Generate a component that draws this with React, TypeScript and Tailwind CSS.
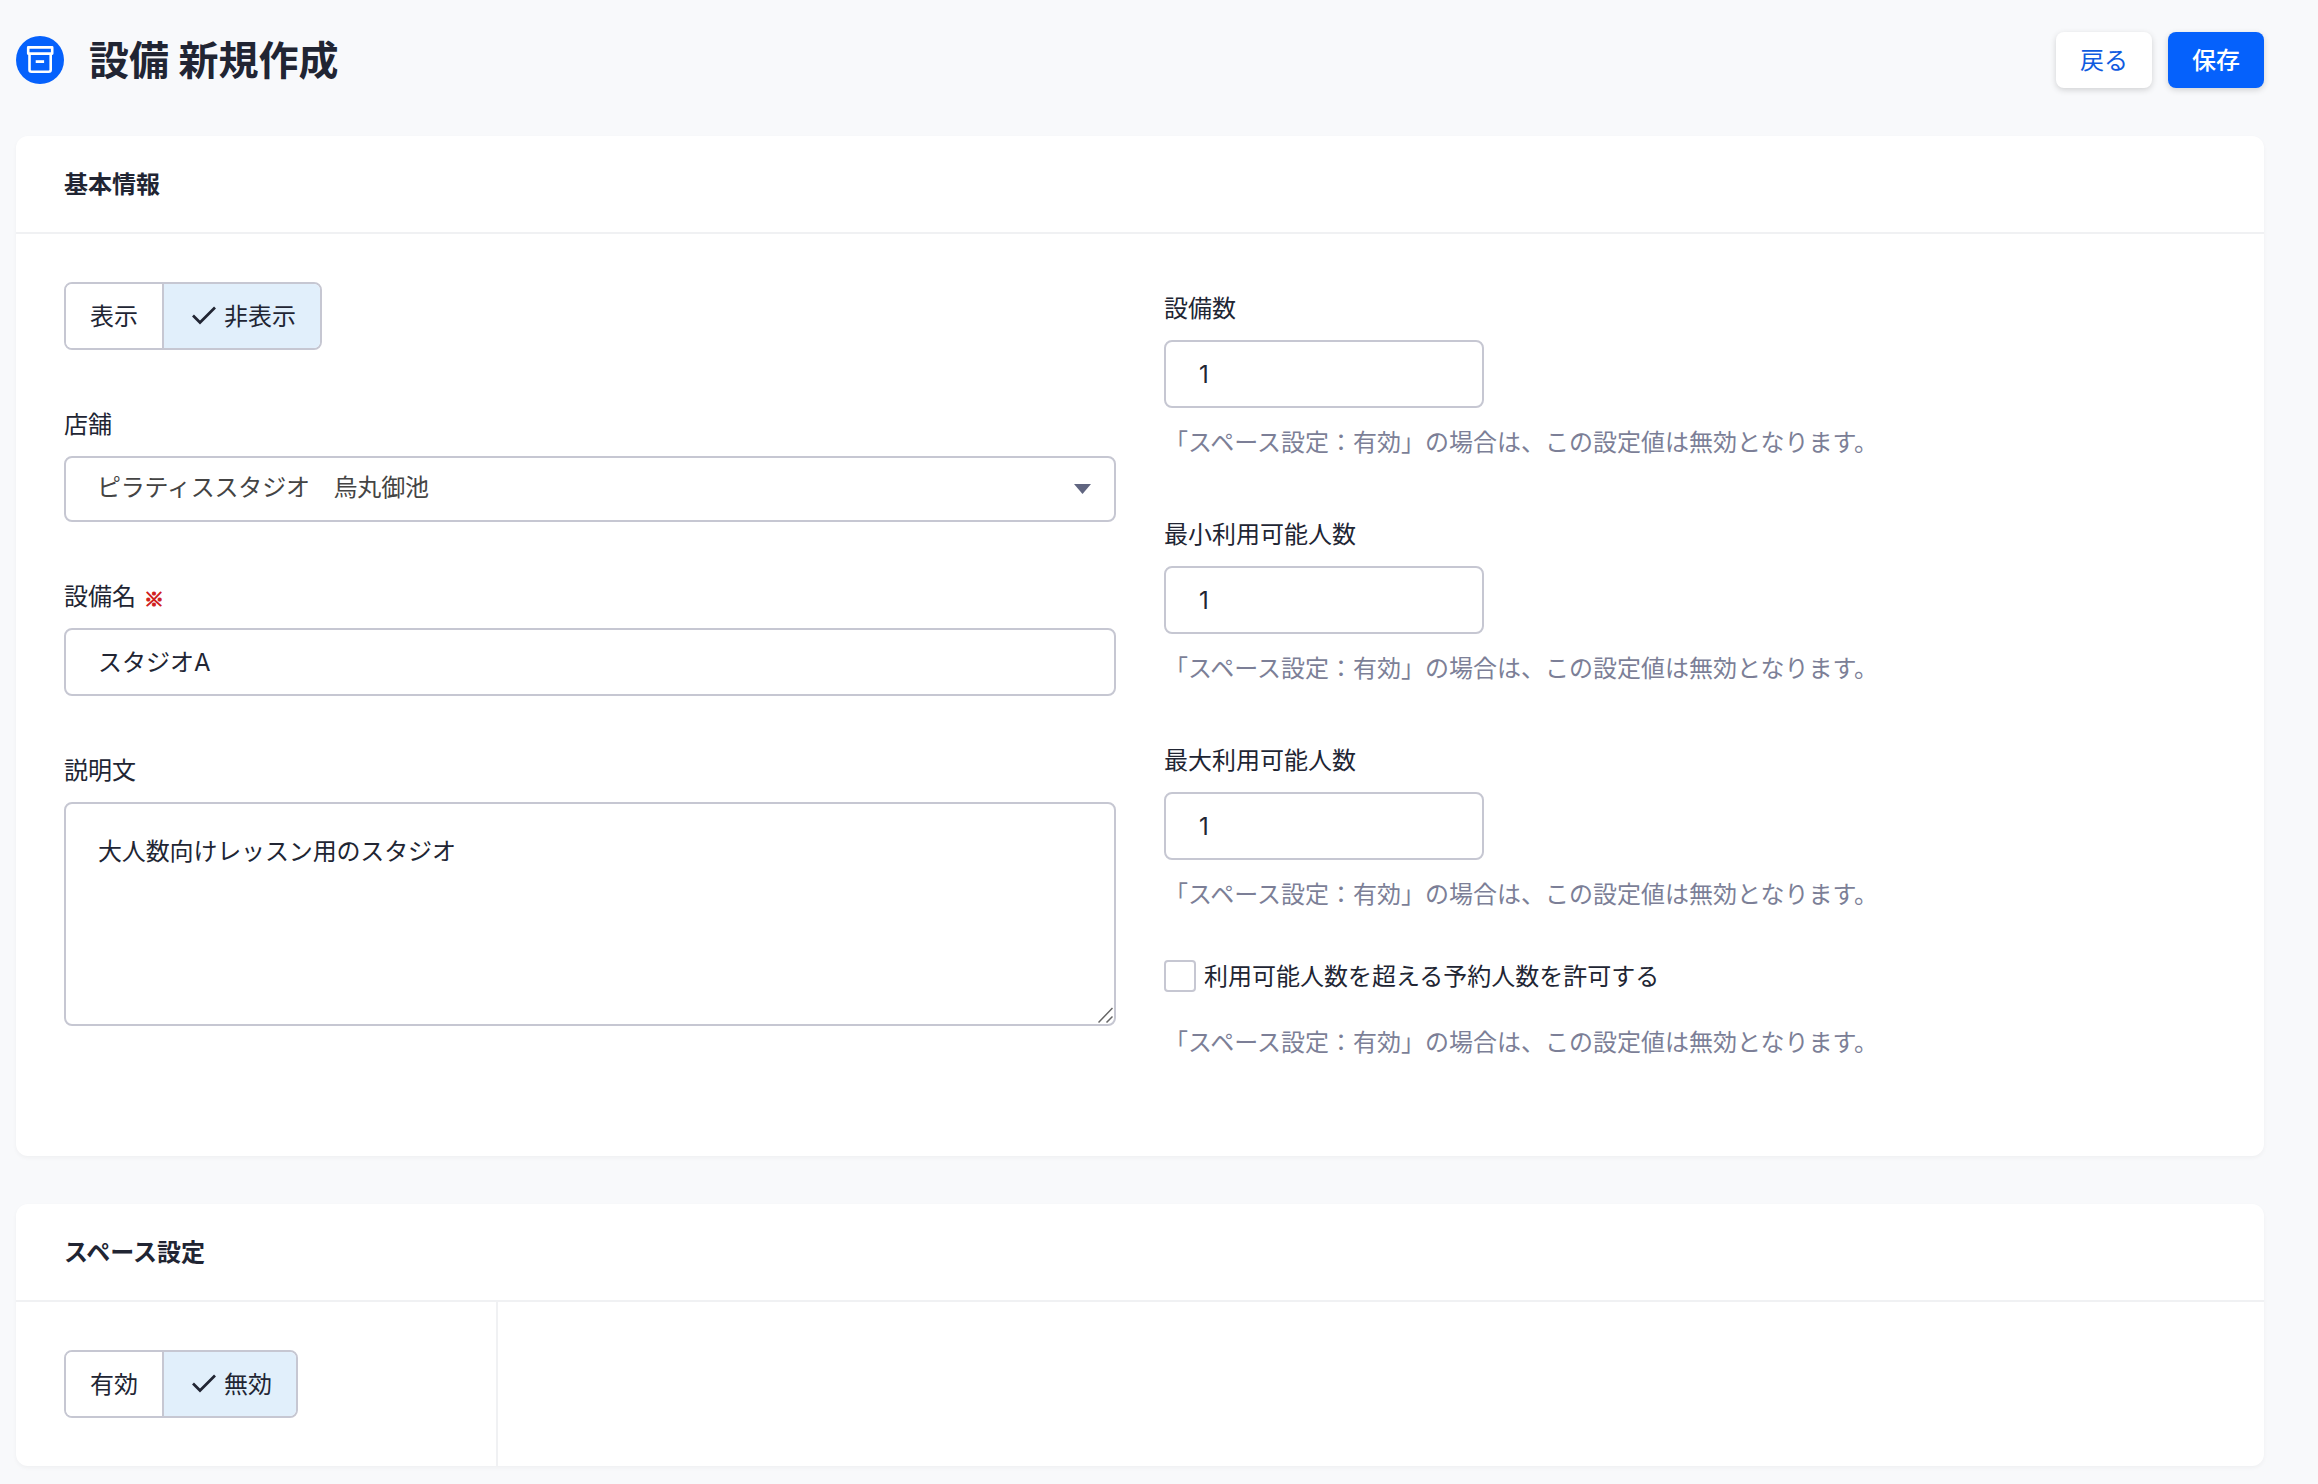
import { useState } from 'react';

function ArchiveIcon() {
  return (
    <div className="w-12 h-12 rounded-full bg-[#0561fc] flex items-center justify-center">
      <svg width="28" height="28" viewBox="0 0 28 28" fill="none" stroke="#fff" strokeWidth="2.600">
        <path d="M2.200 1.400h24v6.200h-24z" strokeLinejoin="round" />
        <path d="M3.500 7.500v16.200a2 2 0 0 0 2 2h17.200a2 2 0 0 0 2-2V7.500" />
        <path d="M9.700 15.600h8.400" strokeWidth="2.800" />
      </svg>
    </div>
  );
}

function CheckIcon() {
  return (
    <svg className="w-9 h-8" viewBox="0 0 36 32" fill="none" stroke="#212533" strokeWidth="2.700">
      <path d="M5 15.500l7 7L27 7.500" />
    </svg>
  );
}

function Toggle({ options, initial }: { options: string[]; initial: string }) {
  const [selected, setSelected] = useState(initial);

  return (
    <div className="inline-flex h-[68px] border-2 border-[#c6c7d2] rounded-lg overflow-hidden">
      {options.map((option, i) => (
        <button
          key={option}
          onClick={() => setSelected(option)}
          className={`flex items-center px-6 ${i > 0 ? 'border-l-2 border-[#c6c7d2]' : ''} ${
            selected === option ? 'bg-[#e1effb]' : 'bg-white'
          }`}
        >
          {selected === option && <CheckIcon />}
          <span className="pt-0.5">{option}</span>
        </button>
      ))}
    </div>
  );
}

function Label({ text, required }: { text: string; required?: boolean }) {
  return (
    <div className="h-9 mb-[14px] pt-0.5 flex items-center">
      <span>{text}</span>
      {required && (
        <span className="ml-2 mt-[3px] text-[20px] leading-8 font-bold text-[#d0211c] font-['Noto_Sans_CJK_JP',sans-serif] [-webkit-text-stroke:1px_#d0211c]">
          ※
        </span>
      )}
    </div>
  );
}

function HelpText() {
  return (
    <p className="h-9 leading-[38px] text-[#7c7f97] whitespace-nowrap">
      「スペース設定：有効」の場合は、この設定値は無効となります。
    </p>
  );
}

function NumberField({ label }: { label: string }) {
  const [value, setValue] = useState('1');

  return (
    <div className="mb-14">
      <Label text={label} />
      <input
        value={value}
        onChange={(e) => setValue(e.target.value)}
        className="block w-80 h-[68px] mb-4 pl-[33px] pr-8 border-2 border-[#c6c7d2] rounded-lg outline-none"
      />
      <HelpText />
    </div>
  );
}

function CardHeader({ title }: { title: string }) {
  return (
    <div className="h-[98px] pl-12 pt-0.5 flex items-center border-b-2 border-[#f0f1f3]">
      <h2 className="font-bold">{title}</h2>
    </div>
  );
}

export default function App() {
  const [name, setName] = useState('スタジオA');
  const [description, setDescription] = useState('大人数向けレッスン用のスタジオ');

  return (
    <div className="h-[1484px] overflow-hidden bg-[#f8f9fb] pl-4 pr-[54px] pt-8 text-[24px] leading-9 text-[#212533] font-['Inter','Noto_Sans_CJK_JP',sans-serif]">
      <header className="h-14 mb-12 flex items-center">
        <ArchiveIcon />
        <h1 className="ml-[25px] pt-0.5 text-[40px] leading-[56px] font-bold">設備 新規作成</h1>
        <div className="ml-auto flex gap-4">
          <button className="w-24 h-14 pt-0.5 rounded-lg bg-white text-[#0f5be0] shadow-[0_2px_6px_rgba(0,0,0,0.16)]">戻る</button>
          <button className="w-24 h-14 pt-0.5 rounded-lg bg-[#0561fc] text-white font-medium shadow-[0_2px_6px_rgba(0,0,0,0.16)]">
            保存
          </button>
        </div>
      </header>

      {/* Basic info */}
      <section className="h-[1020px] mb-12 bg-white rounded-xl shadow-[0_2px_4px_rgba(0,0,0,0.04)]">
        <CardHeader title="基本情報" />
        <div className="flex gap-12 px-12 pt-12">
          <div className="w-[1052px]">
            <div className="h-[68px] mb-14">
              <Toggle options={['表示', '非表示']} initial="非表示" />
            </div>

            <div className="mb-14">
              <Label text="店舗" />
              <div className="h-[66px] pl-[31px] pr-[23px] flex items-center justify-between border-2 border-[#c6c7d2] rounded-lg text-[#444]">
                <span className="pb-[2px] tracking-[-0.2px]">ピラティススタジオ　烏丸御池</span>
                <svg width="17" height="10" viewBox="0 0 17 10">
                  <path d="M0 0h17L8.500 10z" fill="#606580" />
                </svg>
              </div>
            </div>

            <div className="mb-14">
              <Label text="設備名" required />
              <input
                value={name}
                onChange={(e) => setName(e.target.value)}
                className="block w-full h-[68px] px-8 pb-[4px] border-2 border-[#c6c7d2] rounded-lg outline-none"
              />
            </div>

            <Label text="説明文" />
            <div className="relative">
              <textarea
                value={description}
                onChange={(e) => setDescription(e.target.value)}
                className="block w-full h-[224px] px-8 py-[30px] tracking-[-0.15px] resize-none border-2 border-[#c6c7d2] rounded-lg outline-none"
              />
              <svg className="absolute right-[3px] bottom-[3px]" width="15" height="16" viewBox="0 0 15 16" stroke="#666" strokeWidth="1.500">
                <path d="M0.500 15.500L14.500 1M8.500 15.500L14.500 9.500" />
              </svg>
            </div>
          </div>

          <div className="pt-2">
            <NumberField label="設備数" />
            <NumberField label="最小利用可能人数" />
            <NumberField label="最大利用可能人数" />
            <div className="-mt-2 mb-8 h-8 flex items-center gap-2">
              <span className="w-8 h-8 border-2 border-[#c6c7d2] rounded-[4px]" />
              <span className="pt-px">利用可能人数を超える予約人数を許可する</span>
            </div>
            <HelpText />
          </div>
        </div>
      </section>

      {/* Space settings */}
      <section className="h-[262px] flex flex-col bg-white rounded-xl shadow-[0_2px_4px_rgba(0,0,0,0.04)]">
        <CardHeader title="スペース設定" />
        <div className="w-[482px] flex-1 pl-12 pt-12 border-r-2 border-[#f0f1f3]">
          <Toggle options={['有効', '無効']} initial="無効" />
        </div>
      </section>
    </div>
  );
}
